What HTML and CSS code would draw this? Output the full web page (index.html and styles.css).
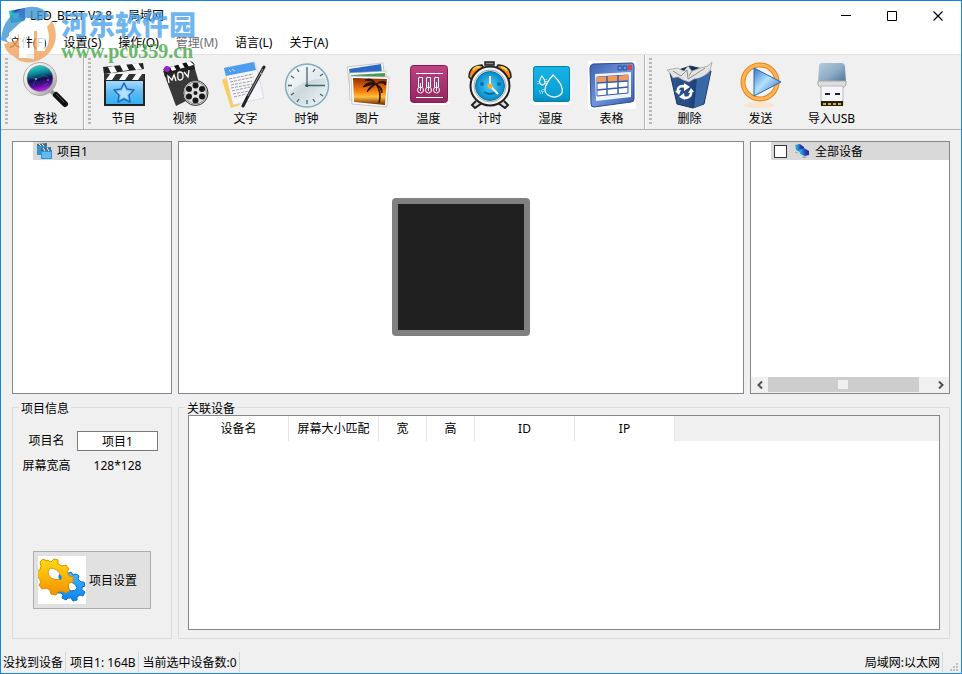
FILE: index.html
```html
<!DOCTYPE html>
<html lang="zh-CN">
<head>
<meta charset="utf-8">
<title>LED_BEST V2.8 局域网</title>
<link rel="stylesheet" href="styles.css">
</head>
<body>
<div class="window">
  <header class="titlebar">
    <svg class="app-icon" width="16" height="16" viewBox="0 0 16 16" aria-hidden="true">
      <defs><linearGradient id="app" x1="0" y1="1" x2="1" y2="0"><stop offset="0" stop-color="#00b040"/><stop offset=".4" stop-color="#20d0c0"/><stop offset=".65" stop-color="#1838c0"/><stop offset="1" stop-color="#5010a0"/></linearGradient></defs>
      <path d="M0 3 16 0v13L2 15z" fill="url(#app)"/><path d="m4 6 6-1-1 5-4 1z" fill="#d8f4f0" opacity=".7"/>
    </svg>
    <h1 class="title"><span>LED_BEST V2.8</span><span>局域网</span></h1>
    <div class="window-buttons">
      <button class="window-button" aria-label="最小化"><svg width="11" height="11" viewBox="0 0 11 11"><path d="M0 4.500h10" stroke="#000"/></svg></button>
      <button class="window-button" aria-label="最大化"><svg width="11" height="11" viewBox="0 0 11 11"><path d="M.5.5h9v9H.5z" fill="none" stroke="#000"/></svg></button>
      <button class="window-button" aria-label="关闭"><svg width="11" height="11" viewBox="0 0 11 11"><path d="m.5.5 9 9m0-9-9 9" stroke="#000" stroke-width="1.200"/></svg></button>
    </div>
  </header>

  <nav class="menubar">
    <button class="menu">文件(F)</button>
    <button class="menu">设置(S)</button>
    <button class="menu">操作(O)</button>
    <button class="menu" disabled>管理(M)</button>
    <button class="menu">语言(L)</button>
    <button class="menu">关于(A)</button>
  </nav>

  <div class="toolbar">
    <div class="tool-group">
      <span class="grip"></span>
      <button class="tool wide">
        <svg viewBox="0 0 48 48">
          <defs><linearGradient id="lens" x1=".4" y1="0" x2=".6" y2="1"><stop offset="0" stop-color="#30d0c8"/><stop offset=".3" stop-color="#078496"/><stop offset=".52" stop-color="#10104a"/><stop offset=".75" stop-color="#501098"/><stop offset="1" stop-color="#d020e8"/></linearGradient><linearGradient id="ring" x1="0" y1="0" x2="1" y2="1"><stop offset="0" stop-color="#fff"/><stop offset=".6" stop-color="#d8d8d8"/><stop offset="1" stop-color="#888"/></linearGradient></defs>
          <path d="m29 30 5 5" stroke="#999" stroke-width="4"/>
          <path d="m34 34 9 9" stroke="#111" stroke-width="6" stroke-linecap="round"/><path d="m34 33 8 8" stroke="#555" stroke-width="1"/>
          <circle cx="18" cy="18" r="16.500" fill="url(#ring)" stroke="#aaa"/>
          <circle cx="18" cy="17.500" r="13" fill="url(#lens)" stroke="#888" stroke-width=".6"/>
          <path d="m8 16 6 2 8-4 5 3m-13 1-3 7M21 25l5-3" stroke="#50a0d0" stroke-width=".6" fill="none" opacity=".5"/>
          <circle cx="14" cy="18" r=".8" fill="#fff"/><circle cx="26" cy="19" r=".7" fill="#f8f"/>
        </svg><span>查找</span></button>
    </div>
    <div class="tool-group">
      <span class="grip"></span>
      <button class="tool">
        <svg viewBox="0 0 48 48">
          <defs><linearGradient id="board" x1="0" y1="0" x2="0" y2="1"><stop offset="0" stop-color="#a4dafc"/><stop offset=".5" stop-color="#5eb8f2"/><stop offset="1" stop-color="#32b0f0"/></linearGradient></defs>
          <path d="m3 6 40-4 1 6-40 5z" fill="#222"/><path d="m8 6 6-1 3 6-6 1zM20 4l6-1 3 6-6 1zM32 3l6-1 4 6-6 1z" fill="#fff"/>
          <path d="M4 13h41v32H4z" fill="#222"/><path d="M4 13h40v6H4z" fill="#333"/><path d="m10 13h6l-4 6H6zM23 13h6l-4 6h-6zM36 13h6l-4 6h-6z" fill="#fff"/>
          <path d="M6 20h37v23H6z" fill="url(#board)"/>
          <path d="m24 22 3 6 7 1-5 5 1 7-6-3-6 3 1-7-5-5 7-1z" fill="#78c8fa" stroke="#2866b8" stroke-width="1.500" stroke-linejoin="round"/><path d="m24 25 2 5 5 1-4 3 1 4-4-2-4 2 1-4-4-3 5-1z" fill="#b4e1ff"/>
        </svg><span>节目</span></button>
      <button class="tool">
        <svg viewBox="0 0 48 48">
          <path d="m2 10 30-9 9 31-26 13z" fill="#383838"/><path d="m2 8 28-8 4 4-28 10z" fill="#111"/><path d="m9 6 4-1 3 5-4 2zM17 3l4-1 3 5-4 2zM25 1l4-1 4 4-5 2z" fill="#fff"/><path d="m3 12 30-8 1 4-30 8z" fill="#222"/><circle cx="6" cy="8" r="3" fill="#9820cf"/>
          <path d="m8 22-1-7 4 4 2-5 2 6m2-6q-1 5 2 5t3-4-3-4-2 3m6-3 4 5 1-7" fill="none" stroke="#fff" stroke-width="1.300"/>
          <circle cx="34.500" cy="32" r="12.500" fill="#ddd" stroke="#333"/><circle cx="34.500" cy="32" r="11" fill="none" stroke="#888"/>
          <g fill="#181818"><circle cx="34.500" cy="24.500" r="3"/><circle cx="41" cy="28" r="3"/><circle cx="41" cy="35.500" r="3"/><circle cx="34.500" cy="39.500" r="3"/><circle cx="28" cy="35.500" r="3"/><circle cx="28" cy="28" r="3"/><circle cx="34.500" cy="32" r="2"/></g>
        </svg><span>视频</span></button>
      <button class="tool">
        <svg viewBox="0 0 48 48">
          <path d="m0 19 6-3 12 28-9 3z" fill="#f9cf58"/><path d="m2 7 31-6 9 36-31 7z" fill="#f5f5fb" stroke="#ccd" stroke-width=".6"/><path d="m2 7 30-6 2 8-30 6z" fill="#4e9cf0"/><path d="m7 9 2 2m1-3 3 2" stroke="#bde1ff"/>
          <path d="m7 18 24-5M8 21l24-5M9 24l21-4M9 27l22-4M10 30l18-4M11 33l16-3M12 36l12-3" stroke="#888" stroke-width=".8" stroke-dasharray="3 1"/>
          <path d="m42 6-17 31-4 8" fill="none" stroke="#222" stroke-width="3" stroke-linecap="round"/><path d="M41 8 26 35" stroke="#999" stroke-width="1"/><path d="m38 12 3 2" stroke="#ddd"/>
        </svg><span>文字</span></button>
      <button class="tool">
        <svg viewBox="0 0 48 48">
          <defs><linearGradient id="clock" x1="0" y1="0" x2="1" y2="1"><stop offset="0" stop-color="#f7fafb"/><stop offset=".5" stop-color="#ccd8dc"/><stop offset="1" stop-color="#f4f9fb"/></linearGradient></defs>
          <circle cx="24" cy="24.500" r="21.500" fill="url(#clock)" stroke="#83abbb" stroke-width="1.500"/><circle cx="24" cy="24.500" r="20" fill="none" stroke="#dceef4"/><path d="M6 33Q16 19 43 17A20 20 0 0 0 6 17z" fill="#fff" opacity=".5"/>
          <path d="M24 6v19M22 24.500h20M24 39v4M5 24.500h4M14 8l2 3m16-3-2 3M8 15l3 2m26-2 3-2M8 34l3-2m26 1 3 2M14 41l2-3m16 3-2-3" stroke="#456474" stroke-width="1.300"/><circle cx="24" cy="24.500" r="1.500" fill="#355565"/>
        </svg><span>时钟</span></button>
      <button class="tool">
        <svg viewBox="0 0 48 48">
          <defs><linearGradient id="sunset" x1="0" y1="0" x2="0" y2="1"><stop offset="0" stop-color="#902d00"/><stop offset=".5" stop-color="#fa8210"/><stop offset=".7" stop-color="#ffc040"/><stop offset="1" stop-color="#702000"/></linearGradient></defs>
          <path d="m3 6 36-4 3 28-34 9z" fill="#fff" stroke="#aaa" stroke-width=".6"/><path d="m5 8 32-5 2 18-31 5z" fill="#2c69c6"/><path d="m5 12 37-2v28l-36 1z" fill="#fff" stroke="#aaa" stroke-width=".6"/><path d="m7 14 34-2v9l-33 2z" fill="#4a9b5a"/>
          <path d="m7 15 38 1-2 30-35-3z" fill="#fff" stroke="#aaa" stroke-width=".6"/><path d="m9 17 34 1-2 26-31-3z" fill="url(#sunset)"/>
          <path d="M35 42q3-11-3-19" fill="none" stroke="#2b1100" stroke-width="1.500"/><path d="M32 23q-8-4-13 3 6-2 13-3-7 2-9 8 5-5 9-8 5 4 6 9 1-6-6-9 7-3 9 1l1-3q-6-2-10 2-4-7-11-4 7 0 11 4z" fill="#2b1100" stroke="#2b1100"/>
        </svg><span>图片</span></button>
      <button class="tool">
        <svg viewBox="0 0 48 48">
          <defs><linearGradient id="pink" x1="0" y1="0" x2="0" y2="1"><stop offset="0" stop-color="#bf4184"/><stop offset="1" stop-color="#91265e"/></linearGradient></defs>
          <path d="M1 41h46l-6 3H8z" fill="#fff"/><rect x="5.500" y="4.500" width="37" height="37" rx="3" fill="url(#pink)" stroke="#861b54"/>
          <path d="M11 12.500h27M11 36.500h27" stroke="#fff"/><path d="M13.500 26V16.500h4V26m4 0v-9.500h4V26m4 0v-9.500h4V26" fill="none" stroke="#fff"/><g fill="none" stroke="#fff"><circle cx="15.500" cy="29" r="3"/><circle cx="23.500" cy="29" r="3"/><circle cx="31.500" cy="29" r="3"/></g><path d="M15.500 22v8m8-9v9m8-9v9" stroke="#fff"/>
        </svg><span>温度</span></button>
      <button class="tool">
        <svg viewBox="0 0 48 48">
          <defs><radialGradient id="face"><stop offset="0" stop-color="#4bd0ff"/><stop offset="1" stop-color="#0788c6"/></radialGradient></defs>
          <path d="m10 40-4 4 3 3 7-5m22-2 4 4-3 3-7-5" fill="#ddd" stroke="#222" stroke-width="2"/><path d="M19 4V1h9v3z" fill="#888" stroke="#222" stroke-width="1.500"/>
          <path d="M3 16Q3 5 16 4l3 5L6 19zM45 16Q45 5 32 4l-3 5 13 10z" fill="#f88810" stroke="#222" stroke-width="1.500"/><path d="M7 9q3-4 7-3M35 6q5 1 6 4" stroke="#ffd24c" stroke-width="2" fill="none"/>
          <circle cx="24" cy="25" r="19.500" fill="#f3f3f3" stroke="#222" stroke-width="2"/><circle cx="24" cy="25" r="16" fill="#eee" stroke="#aaa"/><circle cx="24" cy="25" r="14.500" fill="url(#face)" stroke="#087aad"/>
          <circle cx="16" cy="23" r="2" fill="#096ea9"/><circle cx="33" cy="23" r="2" fill="#096ea9"/><path d="M18 31q6 4 12 0" fill="none" stroke="#096ea9" stroke-width="2"/><path d="M24 15v10l8 8" fill="none" stroke="#fff" stroke-width="2"/><circle cx="24" cy="25" r="2.500" fill="#ffaf22"/>
        </svg><span>计时</span></button>
      <button class="tool">
        <svg viewBox="0 0 48 48">
          <defs><linearGradient id="cyan" x1="0" y1="0" x2="0" y2="1"><stop offset="0" stop-color="#18b4e4"/><stop offset=".8" stop-color="#08a0d4"/><stop offset="1" stop-color="#0788ba"/></linearGradient></defs>
          <path d="M1 41h46l-6 3H8z" fill="#fff"/><rect x="6.500" y="5.500" width="36" height="35" rx="2" fill="url(#cyan)" stroke="#0781ad"/>
          <path d="M26 14q-13 15-5 20t14-2q2-8-9-18zM15 15q-5 7 0 9 6-1 0-9z" fill="none" stroke="#fff" stroke-width="1.200"/><path d="M19 18v7m-8-5v4m1 6h3m1-2v4m-3 0h3" stroke="#fff" stroke-dasharray="1 1"/>
        </svg><span>湿度</span></button>
      <button class="tool">
        <svg viewBox="0 0 48 48">
          <defs><linearGradient id="frame" x1="0" y1="0" x2="1" y2="1"><stop offset="0" stop-color="#3c62ae"/><stop offset=".5" stop-color="#7195db"/><stop offset="1" stop-color="#365aa8"/></linearGradient></defs>
          <path d="M0 0h48v48H0z" fill="#fff"/><path d="m5 3 39-1q2 0 2 3v33q0 3-3 3L6 46q-3 0-3-3L2 7q0-3 3-4z" fill="url(#frame)" stroke="#2a4b94"/><path d="m7 13 36-2v25L8 40z" fill="#edf3ff"/><path d="m9 16 31-2v18L9 35z" fill="#fff" stroke="#385da9"/><path d="m9 16 31-2v6L9 22z" fill="#f49a58"/><path d="m9 22 31-2M9 29l31-3M19 15v19m11-20v19" stroke="#385da9" stroke-width="1.500"/><path d="M30 5h4v4h-4zM35 5h4v4h-4z" fill="#6e92d6" stroke="#2a4b94"/><path d="M40 4h4v5h-4z" fill="#e3423a"/>
        </svg><span>表格</span></button>
    </div>
    <div class="tool-group last">
      <span class="grip"></span>
      <button class="tool wide">
        <svg viewBox="0 0 48 48">
          <defs><linearGradient id="bin" x1="0" y1="0" x2="1" y2="0"><stop offset="0" stop-color="#2c5590"/><stop offset=".45" stop-color="#284c86"/><stop offset=".6" stop-color="#1c3f76"/><stop offset="1" stop-color="#5f8dc5"/></linearGradient></defs>
          <path d="m4 12 20-7 21 5-7 33-11 4-16-4z" fill="url(#bin)" stroke="#18345f"/><path d="m5 12 26 5 13-6-8-3-13-2z" fill="#142b50"/>
          <path d="m1 9 10-2 7 3 4-5 4 5 8-3 8-2 4-4-2 9-8 7-8 1-5 3-6-2-5-3-5 1-3-5z" fill="#e4e4e4" stroke="#999" stroke-width=".7"/><path d="m7 10 8 5 6-6 1 9 8-5 9-6M26 10l-3 5" fill="none" stroke="#777" stroke-width=".8"/>
          <path d="m31 18 13-6-7 31-9 4z" fill="#3a68a6"/>
          <path d="M12 31q-1-6 5-6l2 1M25 30q1 6-5 7l-3-1" fill="none" stroke="#fff" stroke-width="2.500"/><path d="m18 22 6 4-6 4zM18 32l-5 4 6 3zM9 30l6-1-2 5zM28 31l-6 1 3-5z" fill="#fff"/>
        </svg><span>删除</span></button>
      <button class="tool wide">
        <svg viewBox="0 0 48 48">
          <defs><linearGradient id="play" x1="0" y1="0" x2="1" y2="1"><stop offset="0" stop-color="#3378ca"/><stop offset=".45" stop-color="#b7e1fb"/><stop offset="1" stop-color="#1260c0"/></linearGradient></defs>
          <ellipse cx="22" cy="44" rx="15" ry="3" fill="#ffd9a5" opacity=".5"/><circle cx="23" cy="21" r="17" fill="#f4f4f4" stroke="#e58519" stroke-width="5"/><circle cx="23" cy="21" r="17" fill="none" stroke="#fdb458" stroke-width="3"/><path d="m17 7 27 14-27 14z" fill="url(#play)" stroke="#2868b4"/>
        </svg><span>发送</span></button>
      <button class="tool wide">
        <svg viewBox="0 0 48 48">
          <defs><linearGradient id="usb" x1="0" y1="0" x2="1" y2="1"><stop offset="0" stop-color="#b6cad9"/><stop offset=".5" stop-color="#8faec8"/><stop offset="1" stop-color="#496f92"/></linearGradient></defs>
          <path d="M14 2h19q4 0 4 4l1 16H10l1-16q0-4 3-4z" fill="url(#usb)"/><path d="M10 20h28v4l-3 3H13l-3-3z" fill="#ddd" stroke="#aaa"/><path d="M13 25h22v19H13z" fill="#f5f5fa" stroke="#bbb"/><path d="M17 32h5v2h-5zM27 32h5v2h-5z" fill="#222"/><path d="M13 40h22v5H13z" fill="#222"/><path d="M15 42h3v2h-3zm5 0h3v2h-3zm5 0h3v2h-3zm5 0h3v2h-3z" fill="#e9ae20"/>
        </svg><span>导入USB</span></button>
    </div>
  </div>

  <main class="workspace">
    <section class="panel">
      <div class="tree-row">
        <svg width="16" height="16" viewBox="0 0 16 16"><path d="M1 3h10v9H1z" fill="#3292d4"/><path d="m1 1 10-1v3H1z" fill="#456b83"/><path d="m3 1 2 2m1-2 2 2" stroke="#fff"/><path d="M5 7h11v9H5z" fill="#2b91d8"/><path d="M6 9h9v6H6z" fill="#64baf0"/><path d="m5 5 10-1v4H5z" fill="#456b83"/><path d="m7 5 2 3m2-3 2 3" stroke="#fff"/></svg>
        <span>项目1</span>
      </div>
    </section>
    <section class="panel stage"><div class="screen"></div></section>
    <section class="panel devices">
      <label class="tree-row">
        <input type="checkbox" class="check">
        <svg width="16" height="16" viewBox="0 0 16 16"><defs><linearGradient id="dev"><stop offset="0" stop-color="#30d0dc"/><stop offset=".6" stop-color="#2048c0"/><stop offset="1" stop-color="#401590"/></linearGradient></defs><path d="m1 2 5-1 4 3v4l-4 1-4-2z" fill="url(#dev)"/><path d="m1 9 3 1" stroke="#aaa"/><path d="m5 7 5-2 5 3v4l-4 1-5-2z" fill="url(#dev)"/><path d="m10 13-2 2h5l-2-2" fill="#aaa"/></svg>
        <span>全部设备</span>
      </label>
      <div class="scrollbar">
        <button class="arrow" aria-label="向左"><svg width="6" height="8" viewBox="0 0 6 8"><path d="M5 .5 1.500 4 5 7.500" fill="none" stroke="#505050" stroke-width="2"/></svg></button>
        <div class="track"><div class="thumb"><span class="thumb-mark"></span></div></div>
        <button class="arrow" aria-label="向右"><svg width="6" height="8" viewBox="0 0 6 8"><path d="M1 .5 4.500 4 1 7.500" fill="none" stroke="#505050" stroke-width="2"/></svg></button>
      </div>
    </section>

    <fieldset class="group info">
      <legend>项目信息</legend>
      <div class="form">
        <label for="name">项目名</label><input id="name" class="field" type="text" value="项目1">
        <span>屏幕宽高</span><output>128*128</output>
      </div>
      <button class="settings">
        <svg width="48" height="48" viewBox="0 0 48 48">
          <defs>
            <linearGradient id="gold" x1="0" y1="0" x2="0" y2="1"><stop offset="0" stop-color="#ffdc10"/><stop offset="1" stop-color="#f59000"/></linearGradient>
            <linearGradient id="blue" x1="0" y1="0" x2="0" y2="1"><stop offset="0" stop-color="#48b8ff"/><stop offset="1" stop-color="#0a84ee"/></linearGradient>
          </defs>
          <path d="M0 0h48v48H0z" fill="#fff"/>
          <path fill-rule="evenodd" d="m31 17 2-1 2 3 3-1 3 2-1 3 3 3 3 0 1 4-3 1 0 3 3 2-2 4-3-1-3 2 0 3-4 1-2-3-3 0-2 2-4-2 1-3-2-2-4 0-1-4 3-2 8-14zm0 9q-3 6 2 9 5 0 6-3-2-6-8-6z" fill="url(#blue)" stroke="#0870cf"/>
          <path fill-rule="evenodd" d="m9 4 4 2 3-3 4 1 0 4 4 2 4-1 3 4-2 3 2 4 4 1 0 5-4 1-1 4 2 3-4 3-4-2-4 1-2 3-5-1-1-4-4-2-4 1-3-4 2-3-2-4-3-2 0-5 4-1 1-4-1-4 3-3 4 2zm3 8q-5 7 3 11 7 2 8-3-3-8-11-8z" fill="url(#gold)" stroke="#e08c00"/>
          <path d="M21 18q4 2 2 6-4-1-2-6z" fill="#1689df"/>
        </svg>
        <span>项目设置</span>
      </button>
    </fieldset>

    <fieldset class="group linked">
      <legend>关联设备</legend>
      <div class="table-box">
        <table class="table">
          <colgroup><col class="c-name"><col class="c-match"><col class="c-size"><col class="c-size"><col class="c-name"><col class="c-name"><col></colgroup>
          <thead><tr><th>设备名</th><th>屏幕大小匹配</th><th>宽</th><th>高</th><th>ID</th><th>IP</th><td></td></tr></thead>
        </table>
      </div>
    </fieldset>
  </main>

  <footer class="statusbar">
    <span>没找到设备</span><span>项目1: 164B</span><span>当前选中设备数:0</span><span class="network">局域网:以太网</span>
    <svg class="sizegrip" width="9" height="9" viewBox="0 0 9 9"><path d="M6 0h2v2H6zM3 3h2v2H3zM6 3h2v2H6zM0 6h2v2H0zM3 6h2v2H3zM6 6h2v2H6z" fill="#bfbfbf"/></svg>
  </footer>

  <div class="watermark">
    <svg width="56" height="58" viewBox="0 0 56 58" aria-hidden="true">
      <path d="M0 34Q2 7 27 1 41-1 49 10L37 15Q27 8 19 17L8 27v10z" fill="#3d94d2"/>
      <path d="M51 15q9 18-3 32Q36 60 19 55L8 47l9-7V25h8v27l8 1V18h10v27q8-9 3-24z" fill="#f2a35d"/>
      <path d="M5 33 26 11v41h-8V28L7 36zM31 17h13v28h-8V25h-5z" fill="#fff"/>
      <path d="M3 38q1 6 6 10l8-8v-6z" fill="#f2a35d"/>
    </svg>
    <div class="watermark-text"><strong>河东软件园</strong><span>www.pc0359.cn</span></div>
  </div>
</div>
</body>
</html>
```
FILE: styles.css
```css
* { box-sizing: border-box; }

body {
  margin: 0;
  font: 12px/16px "Noto Sans", "Noto Sans CJK SC", sans-serif;
  color: #000;
  background: #f0f0f0;
}

button, input { font: inherit; color: inherit; }
button { padding: 0; border: 0; background: none; }
svg { display: block; flex: none; }

.window {
  position: relative;
  display: flex;
  flex-direction: column;
  min-height: 100vh;
  border: 1px solid #1883d7;
}

.titlebar {
  display: flex;
  align-items: center;
  height: 30px;
  padding-left: 8px;
  background: #fff;
}
.title { display: flex; flex: 1; gap: 16px; margin: 0 0 0 5px; font-size: 12px; font-weight: 400; }
.window-buttons { display: flex; }
.window-button { display: grid; place-items: center; width: 46px; height: 28px; }

.menubar {
  display: flex;
  gap: 17px;
  height: 23px;
  padding-left: 8px;
  background: #fff;
}
.menu:disabled { color: #6d6d6d; }

.toolbar {
  display: flex;
  height: 76px;
  border-top: 1px solid #e4e4e4;
  border-bottom: 1px solid #b0b0b0;
}
.tool-group { display: flex; padding: 0 2px 0 4px; border-right: 1px solid #b0b0b0; }
.tool-group + .tool-group { border-left: 1px solid #fff; padding: 0 2px; }
.tool-group.last { flex: 1; border-right: 0; }
.grip {
  width: 3px;
  margin: 3px 2px 3px 1px;
  background: repeating-linear-gradient(#b8b8b8 0 2px, transparent 2px 4px);
}
.tool-group:first-child .grip { margin-left: 0; }
.tool {
  display: flex;
  flex-direction: column;
  align-items: center;
  width: 61px;
  padding-top: 6px;
}
.tool.wide { width: 71px; }
.tool svg { width: 48px; height: 48px; }
.tool span { margin-top: 2px; }

.workspace {
  flex: 1;
  display: grid;
  grid-template-columns: 160px 1fr 200px;
  grid-template-rows: 1fr 239px;
  gap: 6px;
  padding: 11px 11px 12px;
}
.panel { display: flex; flex-direction: column; border: 1px solid #828790; background: #fff; }
.tree-row {
  display: flex;
  align-items: center;
  gap: 5px;
  height: 18px;
  margin-left: 20px;
  padding: 0 3px;
  background: #d9d9d9;
}
.tree-row span, .settings span, .form span, .form output { padding-top: 2px; }
.stage { align-items: center; justify-content: center; padding-bottom: 2px; }
.screen { width: 138px; height: 138px; border: 6px solid #808080; border-radius: 4px; background: #202020; }
.devices { justify-content: space-between; }
.check {
  appearance: none;
  width: 13px;
  height: 13px;
  margin: 0 2px 0 0;
  border: 1px solid #333;
  background: #fff;
}

.scrollbar { display: flex; height: 16px; background: #f0f0f0; }
.arrow { display: grid; place-items: center; width: 17px; }
.track { flex: 1; }
.thumb { display: grid; place-items: center; width: 92%; height: 15px; background: #cdcdcd; }
.thumb-mark { width: 10px; height: 9px; background: #f0f0f0; }

.group { min-width: 0; margin: 0; padding: 0 9px 8px; border: 1px solid #dcdcdc; }
.group legend { height: 15px; margin-left: -3px; padding: 0 2px; line-height: 17px; }
.info { display: flex; flex-direction: column; align-items: center; padding-bottom: 29px; }
.linked { grid-column: 2 / 4; display: flex; }
.form {
  display: grid;
  grid-template-columns: 49px 81px;
  grid-template-rows: 20px 18px;
  gap: 5px 6px;
  align-items: center;
  align-self: flex-start;
  margin-top: 16px;
  text-align: center;
}
.field { width: 100%; height: 20px; padding: 0; border: 1px solid #7a7a7a; background: #fff; text-align: center; }
.settings {
  display: flex;
  align-items: center;
  gap: 3px;
  width: 118px;
  height: 58px;
  margin-top: auto;
  padding: 0 4px;
  border: 1px solid #adadad;
  background: #e1e1e1;
}

.table-box { flex: 1; border: 1px solid #828790; background: #fff; }
.table { width: 100%; table-layout: fixed; border-collapse: separate; border-spacing: 0; }
.table th { height: 25px; padding: 0; border-right: 1px solid #e5e5e5; font-weight: 400; }
.table td { padding: 0; background: #f0f0f0; }
.c-name { width: 100px; }
.c-match { width: 90px; }
.c-size { width: 48px; }

.statusbar { display: flex; align-items: center; height: 22px; padding: 0 2px; }
.statusbar span { padding: 2px 2px 0 0; margin-right: 4px; border-right: 1px solid #d7d7d7; line-height: 18px; }
.statusbar .network { margin-left: auto; margin-right: 7px; }
.sizegrip { align-self: flex-end; margin-bottom: 1px; }

.watermark {
  position: absolute;
  top: 5px;
  left: 0;
  display: flex;
  gap: 4px;
  opacity: .8;
  pointer-events: none;
}
.watermark-text { display: flex; flex-direction: column; }
.watermark-text strong { font: 900 27px/35px "Noto Sans CJK SC", sans-serif; color: #4ca5ee; }
.watermark-text span { font: bold 20px/20px "Liberation Serif", serif; color: #46a846; }
```
